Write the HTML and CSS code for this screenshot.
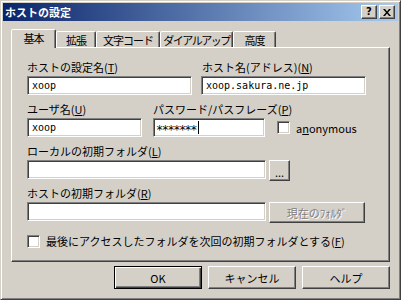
FILE: index.html
```html
<!DOCTYPE html>
<html lang="ja">
<head>
  <meta charset="UTF-8">
  <title>ホストの設定</title>
  <link rel="stylesheet" href="styles.css">
</head>
<body>
  <div class="window">
    <div class="titlebar">
      <span class="title">ホストの設定</span>
      <div class="title-buttons">
        <span class="tbtn help">?</span>
        <span class="tbtn close">
          <svg width="8" height="7" viewBox="0 0 8 7"><path d="M0 0h2l2 2.4 2-2.4h2l-3 3.5 3 3.5h-2l-2-2.4-2 2.4h-2l3-3.5z" fill="#000"/></svg>
        </span>
      </div>
    </div>

    <div class="tabs">
      <div class="tab active tab-basic">基本</div>
      <div class="tab tab-ext">拡張</div>
      <div class="tab tab-code">文字コード</div>
      <div class="tab tab-dial">ダイアルアップ</div>
      <div class="tab tab-adv">高度</div>
    </div>

    <div class="panel">
      <div class="row">
        <div class="field w-half">
          <label>ホストの設定名(<u>T</u>)</label>
          <div class="edit">xoop</div>
        </div>
        <div class="field w-half gap-9">
          <label class="nudge">ホスト名(アドレス)(<u>N</u>)</label>
          <div class="edit">xoop.sakura.ne.jp</div>
        </div>
      </div>

      <div class="row">
        <div class="field w-user">
          <label>ユーザ名(<u>U</u>)</label>
          <div class="edit">xoop</div>
        </div>
        <div class="field w-pass gap-11">
          <label>パスワード/パスフレーズ(<u>P</u>)</label>
          <div class="edit password">
            <span class="stars">*******</span>
            <span class="caret"></span>
          </div>
        </div>
        <div class="check-group anon">
          <span class="checkbox"></span>
          <span class="check-label">a<u>n</u>onymous</span>
        </div>
      </div>

      <div class="row">
        <div class="field">
          <label>ローカルの初期フォルダ(<u>L</u>)</label>
          <div class="input-line">
            <div class="edit w-long"></div>
            <span class="btn btn-browse">...</span>
          </div>
        </div>
      </div>

      <div class="row">
        <div class="field">
          <label>ホストの初期フォルダ(<u>R</u>)</label>
          <div class="input-line">
            <div class="edit w-long"></div>
            <span class="btn btn-current disabled">現在のﾌｫﾙﾀﾞ</span>
          </div>
        </div>
      </div>

      <div class="check-group last-folder">
        <span class="checkbox"></span>
        <span class="check-label">最後にアクセスしたフォルダを次回の初期フォルダとする(<u>F</u>)</span>
      </div>
    </div>

    <div class="dialog-buttons">
      <span class="btn btn-dialog default">OK</span>
      <span class="btn btn-dialog">キャンセル</span>
      <span class="btn btn-dialog">ヘルプ</span>
    </div>
  </div>
</body>
</html>
```

FILE: styles.css
```css
body {
  margin: 0;
  font-family: "Noto Sans CJK JP", sans-serif;
  font-size: 11px;
  color: #000;
  background-color: #d4d0c8;
}

.window {
  width: 401px;
  height: 300px;
  box-sizing: border-box;
  border: 1px solid;
  border-color: #d4d0c8 #404040 #404040 #d4d0c8;
  box-shadow: inset 1px 1px #fff, inset -1px -1px #808080;
  padding: 2px;
  background-color: #d4d0c8;
}

/* title bar */

.titlebar {
  height: 18px;
  display: flex;
  align-items: center;
  justify-content: space-between;
  padding: 0 3px 0 2px;
  background: linear-gradient(to right, #0a246a, #a6caf0);
}

.title {
  color: #fff;
  font-weight: bold;
  line-height: 18px;
}

.title-buttons {
  display: flex;
}

.tbtn {
  width: 16px;
  height: 14px;
  box-sizing: border-box;
  display: flex;
  align-items: center;
  justify-content: center;
  background-color: #d4d0c8;
  border: 1px solid;
  border-color: #fff #404040 #404040 #fff;
  box-shadow: inset -1px -1px #808080;
}

.tbtn.help {
  margin-right: 2px;
  font-family: "DejaVu Sans", sans-serif;
  font-weight: bold;
  font-size: 10px;
  line-height: 12px;
}

/* tabs */

.tabs {
  display: flex;
  align-items: flex-end;
  height: 18px;
  margin: 8px 8px 0;
}

.tab {
  height: 16px;
  box-sizing: border-box;
  border: 1px solid;
  border-bottom: none;
  border-color: #fff #404040 transparent #fff;
  border-radius: 2px 2px 0 0;
  box-shadow: inset -1px 0 #808080;
  padding-top: 1px;
  line-height: 14px;
  text-align: center;
  white-space: nowrap;
  letter-spacing: -1px;
  background-color: #d4d0c8;
}

.tab.active {
  height: 19px;
  margin-bottom: -1px;
  position: relative;
  z-index: 1;
}

.tab-basic { width: 45px; }
.tab-ext { width: 40px; }
.tab-code { width: 64px; }
.tab-dial { width: 73px; letter-spacing: -1.5px; }
.tab-adv { width: 43px; }

/* page panel */

.panel {
  height: 215px;
  box-sizing: border-box;
  margin: 0 8px;
  border: 1px solid;
  border-color: #fff #404040 #404040 #fff;
  box-shadow: inset -1px -1px #808080;
  padding: 12px 0 0 15px;
}

.row {
  display: flex;
  height: 42px;
}

.field {
  display: flex;
  flex-direction: column;
}

.field label {
  display: block;
  line-height: 14px;
  height: 14px;
  margin-bottom: 2px;
  white-space: nowrap;
}

.field label.nudge {
  padding-left: 1px;
}

.w-half { width: 165px; }
.w-user { width: 115px; }
.w-pass { width: 112px; }
.w-long { width: 239px; }

.gap-9 { margin-left: 9px; }
.gap-11 { margin-left: 11px; }

.edit {
  height: 19px;
  box-sizing: border-box;
  border: 1px solid;
  border-color: #808080 #fff #fff #808080;
  box-shadow: inset 1px 1px #404040, inset -1px -1px #d4d0c8;
  background-color: #fff;
  padding: 0 4px;
  font-family: "DejaVu Sans Mono", monospace;
  font-size: 10px;
  line-height: 17px;
  white-space: nowrap;
}

.edit.password {
  display: flex;
  align-items: flex-start;
  padding-left: 2px;
}

.stars {
  font-size: 12px;
  line-height: 12px;
  padding-top: 5px;
  letter-spacing: -1.5px;
}

.caret {
  width: 1px;
  height: 13px;
  margin: 2px 0 0 2px;
  background-color: #000;
}

.input-line {
  display: flex;
  align-items: flex-start;
}

/* checkboxes */

.check-group {
  display: flex;
  align-items: center;
}

.check-group.anon {
  height: 19px;
  margin: 16px 0 0 12px;
}

.check-group.last-folder {
  margin-top: 6px;
  height: 14px;
}

.checkbox {
  width: 13px;
  height: 13px;
  box-sizing: border-box;
  border: 1px solid;
  border-color: #808080 #fff #fff #808080;
  box-shadow: inset 1px 1px #404040, inset -1px -1px #d4d0c8;
  background-color: #fff;
}

.check-label {
  margin-left: 6px;
  line-height: 14px;
  white-space: nowrap;
}

/* buttons */

.btn {
  box-sizing: border-box;
  display: flex;
  align-items: center;
  justify-content: center;
  background-color: #d4d0c8;
  border: 1px solid;
  border-color: #fff #404040 #404040 #fff;
  box-shadow: inset -1px -1px #808080;
  white-space: nowrap;
}

.btn-browse {
  width: 21px;
  height: 21px;
  margin-left: 3px;
  line-height: 14px;
  padding-top: 2px;
}

.btn-current {
  width: 96px;
  height: 21px;
  margin-left: 3px;
}

.btn.disabled {
  color: #808080;
  text-shadow: 1px 1px #fff;
}

.dialog-buttons {
  display: flex;
  justify-content: flex-end;
  gap: 6px;
  margin: 4px 8px 0 0;
}

.btn-dialog {
  width: 88px;
  height: 23px;
  line-height: 14px;
}

.btn-dialog.default {
  border-color: #000;
  box-shadow: inset 1px 1px #fff, inset -1px -1px #404040, inset -2px -2px #808080;
}
```
